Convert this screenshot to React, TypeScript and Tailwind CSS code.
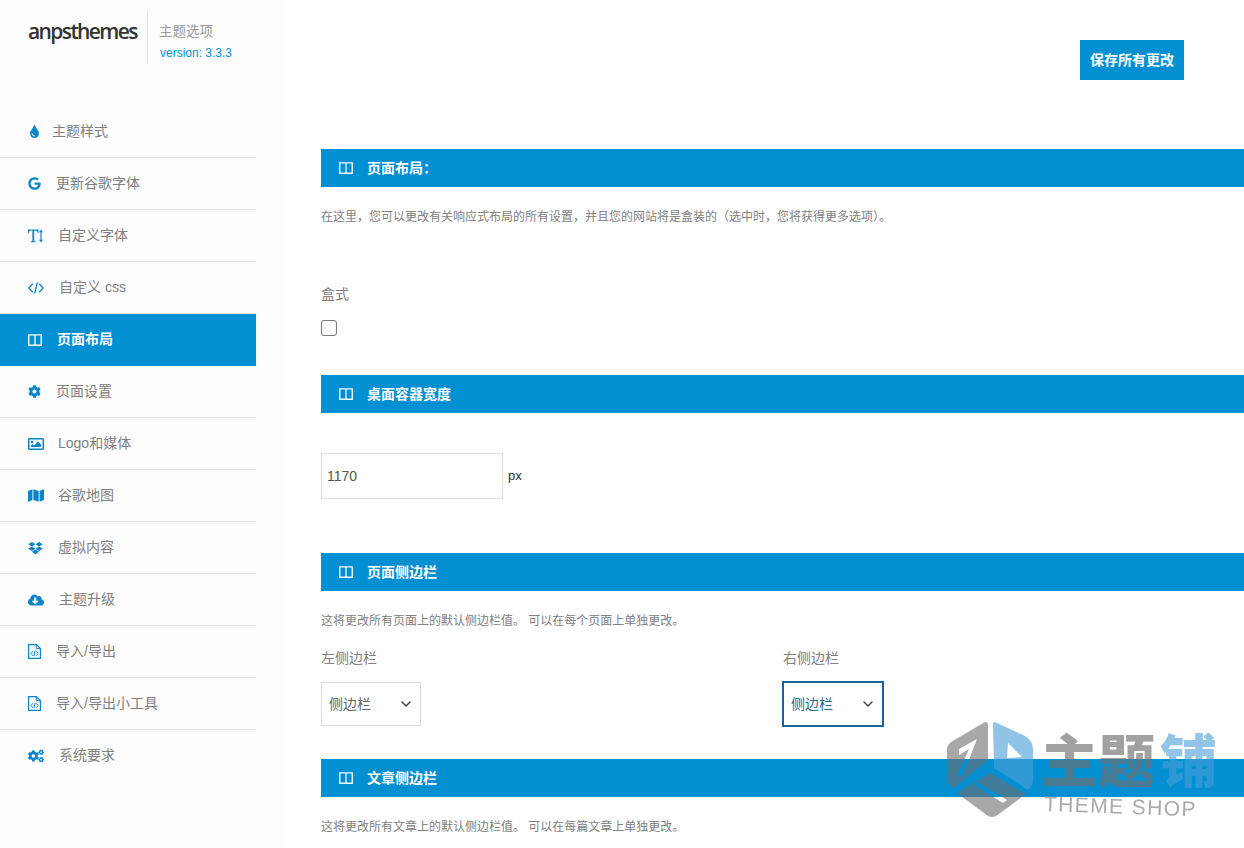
import type { ReactNode } from 'react'
import { FaCloudDownloadAlt, FaCog, FaCogs, FaDropbox, FaGoogle, FaMap, FaRegImage, FaTint } from 'react-icons/fa'
import { ChevronDown } from 'lucide-react'

const FONT = 'font-["Liberation_Sans","Noto_Sans_CJK_SC",sans-serif]'

function ColumnsIcon({ className }: { className?: string }) {
  return (
    <svg viewBox="0 0 14 12" className={className} fill="none" stroke="currentColor">
      <path d="M.75.9h12.5v10.35H.75z" strokeWidth="1.4" />
      <path d="M7 1v10" strokeWidth="1.3" />
    </svg>
  )
}

function TextHeightIcon({ className }: { className?: string }) {
  return (
    <svg viewBox="0 0 15 14" className={className} fill="currentColor">
      <path d="M0 .5h10.500l.1 3.600h-.8C9.400 2.300 8.900 1.500 7 1.500H6.200v10c0 .6.300.8 1.500.9v.9H2.900v-.9c1.200-.1 1.500-.3 1.500-.9v-10H3.600C1.700 1.500 1.200 2.300.8 4.100H0z" />
      <path d="M12.400 3h1.200v8h-1.200z" />
      <path d="M13 .5l2 2.700h-4zM13 13.500l2-2.700h-4z" />
    </svg>
  )
}

function CodeIcon({ className }: { className?: string }) {
  return (
    <svg viewBox="0 0 16 12" className={className} fill="none" stroke="currentColor" strokeWidth="1.3">
      <path d="M4.800 1.800L.9 6l3.900 4.200M11.200 1.800L15.100 6l-3.900 4.200M9.400.5L6.600 11.500" />
    </svg>
  )
}

function FileCodeIcon({ className }: { className?: string }) {
  return (
    <svg viewBox="0 0 13 15" className={className} fill="none" stroke="currentColor">
      <path d="M.6.6h7.800l4 4v9.800H.6z" strokeWidth="1.200" />
      <path d="M8.200.8v3.900h4" strokeWidth="1" />
      <path d="M4.700 7.300L3 9.500l1.700 2.200M8.300 7.300L10 9.500l-1.700 2.200M7.100 6.800L5.900 12.200" strokeWidth="1" />
    </svg>
  )
}

const NAV: { label: string; icon: ReactNode; slot: string; active?: boolean }[] = [
  { label: '主题样式', icon: <FaTint className="h-[13px] w-auto" />, slot: 'w-[24px]' },
  { label: '更新谷歌字体', icon: <FaGoogle className="h-[13px] w-auto" />, slot: 'w-[28px]' },
  { label: '自定义字体', icon: <TextHeightIcon className="h-[14px] w-[15px]" />, slot: 'w-[30px]' },
  { label: '自定义 css', icon: <CodeIcon className="h-[12px] w-[16px]" />, slot: 'w-[31px]' },
  { label: '页面布局', icon: <ColumnsIcon className="h-[12px] w-[14px]" />, slot: 'w-[29px]', active: true },
  { label: '页面设置', icon: <FaCog className="h-[13px] w-auto" />, slot: 'w-[28px]' },
  { label: 'Logo和媒体', icon: <FaRegImage className="h-[16px] w-[16px]" />, slot: 'w-[30px]' },
  { label: '谷歌地图', icon: <FaMap className="h-[15px] w-[16px]" />, slot: 'w-[30px]' },
  { label: '虚拟内容', icon: <FaDropbox className="h-[14px] w-[15px]" />, slot: 'w-[30px]' },
  { label: '主题升级', icon: <FaCloudDownloadAlt className="h-[14px] w-[16px]" />, slot: 'w-[31px]' },
  { label: '导入/导出', icon: <FileCodeIcon className="h-[15px] w-[13px]" />, slot: 'w-[28px]' },
  { label: '导入/导出小工具', icon: <FileCodeIcon className="h-[15px] w-[13px]" />, slot: 'w-[28px]' },
  { label: '系统要求', icon: <FaCogs className="h-[14px] w-[16px]" />, slot: 'w-[31px]' },
]

function Sidebar() {
  return (
    <aside className="w-[284px] shrink-0 bg-[#fdfdfd]">
      <div className="flex h-[106px] pl-[28px] pt-[12px]">
        <div className="w-[119px] pt-[6px] font-['Open_Sans',sans-serif] text-[21px] leading-[26px] font-semibold tracking-[-1.6px] text-[#333]">
          anpsthemes
        </div>
        <div className="h-[51px] border-l border-[#e4e4e4] pl-[11px]">
          <div className="pt-[10px] text-[13.5px] leading-[20px] text-[#999]">主题选项</div>
          <div className="pl-px pt-[2px] text-[12px] leading-[18px] text-[#0390d2]">version: 3.3.3</div>
        </div>
      </div>
      <nav className="w-[256px]">
        {NAV.map((item, i) => (
          <div
            key={item.label}
            className={
              item.active
                ? 'flex h-[52px] items-center bg-[#0390d2] pb-px pl-[28px] text-[14px] font-bold text-white'
                : i === NAV.length - 1
                  ? 'flex h-[52px] items-center pb-px pl-[28px] text-[14px] text-[#808080]'
                  : 'flex h-[52px] items-center border-b border-[#e2e2e2] pl-[28px] text-[14px] text-[#808080]'
            }
          >
            <span className={`${item.slot} flex items-center ${item.active ? 'text-white' : 'text-[#0a85c9]'}`}>
              {item.icon}
            </span>
            {item.label}
          </div>
        ))}
      </nav>
    </aside>
  )
}

function SectionBar({ title }: { title: string }) {
  return (
    <div className="flex h-[38px] items-center bg-[#0390d2] pl-[18px] text-[14px] font-bold text-white">
      <ColumnsIcon className="mr-[14px] h-[12px] w-[14px] opacity-95" />
      {title}
    </div>
  )
}

function SidebarSelect({ focused }: { focused?: boolean }) {
  return (
    <div
      className={
        focused
          ? 'flex h-[46px] w-[102px] items-center justify-between border-2 border-[#1d5f98] pl-[7px] pr-[6px] text-[14px] text-[#2a6a96]'
          : 'flex h-[44px] w-[100px] items-center justify-between border border-[#ddd] pl-[7px] pr-[6px] text-[14px] text-[#666]'
      }
    >
      侧边栏
      <ChevronDown size={16} strokeWidth={2.2} className="text-[#444]" />
    </div>
  )
}

function Watermark() {
  return (
    <div className="pointer-events-none absolute left-[947px] top-[722px] flex h-[98px] w-[275px] blur-[0.5px]">
      <svg viewBox="0 0 87 96" className="h-[96px] w-[87px] shrink-0">
        <path
          fillRule="evenodd"
          d="M38 0 L4 20 Q0 23 0 28 L0 58 Q0 63 7 66 L41 38 L41 3 Q41 0 38 0Z M12 27 L30 17 L15 56 L11 52 L22 27 L12 33Z"
          fill="#6e6e6e"
          fillOpacity="0.6"
        />
        <path
          fillRule="evenodd"
          d="M10 71 L43 51 L79 72 L49 94 Q45 96 41 94Z M30 60 L27 63 L56 81 L60 78Z"
          fill="#6e6e6e"
          fillOpacity="0.6"
        />
        <path
          fillRule="evenodd"
          d="M48 0 L78 14 Q86 19 86 27 L86 57 Q86 65 81 68 L47 46 L46 2 Q46 0 48 0Z M61 21 L75 35 L60 36Z"
          fill="#4a9fd8"
          fillOpacity="0.62"
        />
      </svg>
      <div className="ml-[7px] flex flex-col">
        <div className="flex h-[72px] items-center font-['Noto_Sans_CJK_SC',sans-serif] text-[57px] leading-none font-black">
          <span className="text-[#6e6e6e]/65">主题</span>
          <span className="ml-[5px] text-[#4a9fd8]/60">铺</span>
        </div>
        <div className="ml-[3px] mt-[1px] rotate-[2deg] text-[21px] leading-[26px] tracking-[1.4px] whitespace-nowrap text-[#aaa]">
          THEME SHOP
        </div>
      </div>
    </div>
  )
}

export default function App() {
  return (
    <div className={`${FONT} relative flex h-[848px] w-[1244px] overflow-hidden bg-white`}>
      <Sidebar />
      <main className="min-w-0 flex-1 pl-[37px]">
        <div className="flex h-[149px] items-start justify-end pt-[40px] pr-[60px]">
          <button className="h-[40px] w-[104px] bg-[#0390d2] text-[14px] font-bold text-white">保存所有更改</button>
        </div>

        <SectionBar title="页面布局：" />
        <p className="mt-[21px] h-[18px] text-[12px] leading-[18px] text-[#808080]">
          在这里，您可以更改有关响应式布局的所有设置，并且您的网站将是盒装的（选中时，您将获得更多选项）。
        </p>
        <div className="mt-[57px] h-[22px] text-[14px] leading-[22px] text-[#808080]">盒式</div>
        <input
          type="checkbox"
          className="mt-[15px] block h-[16px] w-[16px] appearance-none rounded-[3px] border border-[#767676] bg-white"
        />

        <div className="mt-[39px]">
          <SectionBar title="桌面容器宽度" />
        </div>
        <div className="mt-[40px] flex items-center">
          <div className="flex h-[46px] w-[182px] items-center border border-[#ddd] pl-[5px] text-[14px] text-[#555]">1170</div>
          <span className="ml-[5px] text-[13px] text-[#333]">px</span>
        </div>

        <div className="mt-[54px]">
          <SectionBar title="页面侧边栏" />
        </div>
        <p className="mt-[21px] h-[18px] text-[12px] leading-[18px] text-[#808080]">
          这将更改所有页面上的默认侧边栏值。 可以在每个页面上单独更改。
        </p>
        <div className="mt-[17px] grid h-[80px] grid-cols-[461px_1fr]">
          <div>
            <div className="h-[22px] text-[14px] leading-[22px] text-[#808080]">左侧边栏</div>
            <div className="mt-[13px]">
              <SidebarSelect />
            </div>
          </div>
          <div>
            <div className="h-[22px] pl-px text-[14px] leading-[22px] text-[#808080]">右侧边栏</div>
            <div className="mt-[12px]">
              <SidebarSelect focused />
            </div>
          </div>
        </div>

        <div className="mt-[32px]">
          <SectionBar title="文章侧边栏" />
        </div>
        <p className="mt-[21px] h-[18px] text-[12px] leading-[18px] text-[#808080]">
          这将更改所有文章上的默认侧边栏值。 可以在每篇文章上单独更改。
        </p>
      </main>
      <Watermark />
    </div>
  )
}
